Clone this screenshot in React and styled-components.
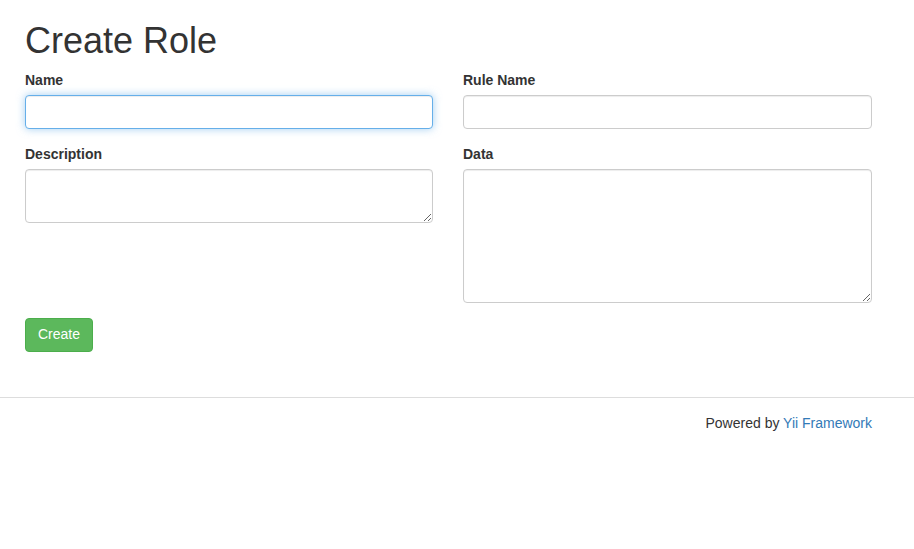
import styled, { createGlobalStyle } from 'styled-components'

const GlobalStyle = createGlobalStyle`
    * {
        box-sizing: border-box;
    }
    body {
        margin: 0;
        background: #fff;
        font-family: "Liberation Sans", Arial, sans-serif;
        font-size: 14px;
        line-height: 1.42857;
        color: #333;
    }
`

function App() {
    return (
        <>
            <GlobalStyle/>
            <Wrap>
                <Title>Create Role</Title>
                <Form onSubmit={e => e.preventDefault()}>
                    <Row>
                        <Column>
                            <Group>
                                <Label htmlFor="name">Name</Label>
                                <Input id="name" type="text" $focused/>
                            </Group>
                            <Group>
                                <Label htmlFor="description">Description</Label>
                                <TextArea id="description" $rows={2}/>
                            </Group>
                        </Column>
                        <Column>
                            <Group>
                                <Label htmlFor="ruleName">Rule Name</Label>
                                <Input id="ruleName" type="text"/>
                            </Group>
                            <Group>
                                <Label htmlFor="data">Data</Label>
                                <TextArea id="data" $rows={6}/>
                            </Group>
                        </Column>
                    </Row>
                    <Group>
                        <Button type="submit">Create</Button>
                    </Group>
                </Form>
            </Wrap>
            <Footer>
                <FooterInner>
                    Powered by <Link href="#">Yii Framework</Link>
                </FooterInner>
            </Footer>
        </>
    )
}

export default App

const Wrap = styled.div`
    width: 872px;
    padding: 0 0 0 25px;
`

const Title = styled.h1`
    margin: 21px 0 9px;
    font-size: 36px;
    font-weight: 500;
    line-height: 1.1;
    color: #333;
`

const Form = styled.form`
    display: flex;
    flex-direction: column;
`

const Row = styled.div`
    display: grid;
    grid-template-columns: 408px 409px;
    column-gap: 30px;
`

const Column = styled.div`
    display: flex;
    flex-direction: column;
`

const Group = styled.div`
    display: flex;
    flex-direction: column;
    align-items: flex-start;
    margin-bottom: 15px;
`

const Label = styled.label`
    display: block;
    margin-bottom: 5px;
    font-weight: bold;
    line-height: 20px;
`

const fieldBase = `
    width: 100%;
    padding: 6px 12px;
    font-family: inherit;
    font-size: 14px;
    line-height: 1.42857;
    color: #555;
    background: #fff;
    border-radius: 4px;
    outline: none;
`

const Input = styled.input`
    ${fieldBase}
    height: 34px;
    border: 1px solid ${p => p.$focused ? '#66afe9' : '#ccc'};
    box-shadow: ${p => p.$focused
        ? 'inset 0 1px 1px rgba(0,0,0,.075), 0 0 8px rgba(102,175,233,.6)'
        : 'inset 0 1px 1px rgba(0,0,0,.075)'};
`

const TextArea = styled.textarea`
    ${fieldBase}
    display: block;
    height: ${p => p.$rows * 20 + 14}px;
    border: 1px solid #ccc;
    box-shadow: inset 0 1px 1px rgba(0,0,0,.075);
    resize: vertical;
`

const Button = styled.button`
    height: 34px;
    padding: 6px 12px;
    font-family: inherit;
    font-size: 14px;
    line-height: 1.42857;
    color: #fff;
    background: #5cb85c;
    border: 1px solid #4cae4c;
    border-radius: 4px;
    cursor: pointer;
`

const Footer = styled.footer`
    margin-top: 30px;
    border-top: 1px solid #ddd;
    padding-top: 16px;
    height: 151px;
`

const FooterInner = styled.div`
    width: 872px;
    text-align: right;
    color: #333;
`

const Link = styled.a`
    color: #337ab7;
    text-decoration: none;
`
